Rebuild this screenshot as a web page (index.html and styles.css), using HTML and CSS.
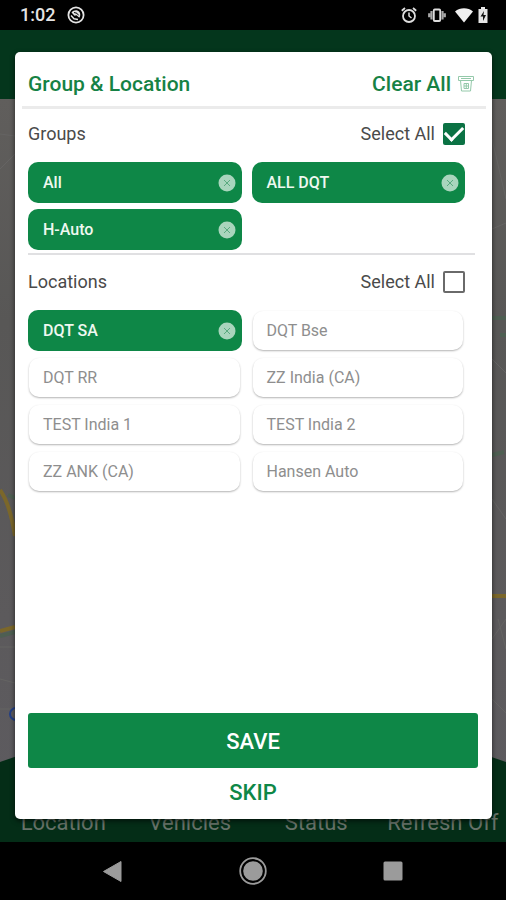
FILE: index.html
```html
<!DOCTYPE html>
<html lang="en">
<head>
<meta charset="utf-8">
<meta name="viewport" content="width=device-width, initial-scale=1">
<title>Group &amp; Location</title>
<link rel="stylesheet" href="styles.css">
</head>
<body>
<svg class="symbols" aria-hidden="true">
  <symbol id="remove" viewBox="0 0 18 18">
    <circle cx="9" cy="9" r="8.5" fill="#a9d5bd"/>
    <path d="M6 6l6 6M12 6l-6 6" stroke="#5aaa80" stroke-width="1" fill="none"/>
  </symbol>
</svg>

<header class="status">
  <span class="clock">1:02</span>
  <svg class="notice" width="18" height="18" viewBox="0 0 18 18" aria-hidden="true">
    <circle cx="9" cy="9" r="7.6" fill="none" stroke="#e4e4e4" stroke-width="1.8"/>
    <path d="M4.5 6.5c2-2.600 6-3 8-.5 1.200 1.800 1 4-.2 5.800L9.500 9.300 7.500 9.800 4.500 6.500z" fill="#e4e4e4"/>
    <path d="M4 9.500l3 3.300 4 .7M7 7l2.500.5" stroke="#e4e4e4" stroke-width="1.400" fill="none"/>
    <path d="M7 6.500l3 .8 1.500 2" stroke="#000" stroke-width="1" fill="none"/>
  </svg>
  <div class="indicators">
    <svg class="alarm" width="18" height="18" viewBox="0 0 18 18" fill="none" stroke="#dedede" aria-hidden="true">
      <circle cx="9" cy="10" r="6" stroke-width="1.800"/>
      <path d="M9 6.500V10l2.500 2" stroke-width="1.500"/>
      <path d="M1.800 4.800L5 2M16.200 4.800L13 2" stroke-width="1.800"/>
    </svg>
    <svg class="vibrate" width="18" height="18" viewBox="0 0 18 18" aria-hidden="true">
      <rect x="5.800" y="3.500" width="6.400" height="11.500" rx="1" fill="#000" stroke="#dedede" stroke-width="1.800"/>
      <path d="M3.500 5v8.500M14.500 5v8.500M1.200 7.200v4M16.800 7.200v4" stroke="#a8a8a8" stroke-width="2.200"/>
    </svg>
    <svg class="wifi" width="18" height="18" viewBox="0 0 18 18" aria-hidden="true">
      <path d="M0 5.500C5 1.200 13 1.200 18 5.500L9 16.500z" fill="#f0f0f0"/>
    </svg>
    <svg class="battery" width="12" height="18" viewBox="0 0 12 18" aria-hidden="true">
      <path d="M4 1h4v2h2.500v14h-9V3H4z" fill="#e6e6e6"/>
      <path d="M7 5L3.500 10.500H6V15l3-6H6.500z" fill="#111"/>
    </svg>
  </div>
</header>

<main class="app">
  <div class="toolbar"></div>
  <div class="map">
    <svg class="map-art" viewBox="0 0 506 743" preserveAspectRatio="none" aria-hidden="true">
      <path d="M0 35L15 37M0 70L15 55M0 548h15M0 580l15 4M0 610h15M492 40l14 60M492 130l14-6M492 260l14 14M492 400l14 20M492 540l14-20M492 600l14 14M498 520l8 30" stroke="#656463" fill="none"/>
      <path d="M8 396l7 3M0 537l15-4M492 219h14M500 236h6M492 356l12-3" stroke="#4e5f52" stroke-width="4" fill="none"/>
      <path d="M0 391Q10 405 15 437M0 532L15 528M492 497h14" stroke="#7b672a" stroke-width="4" fill="none"/>
      <circle cx="16" cy="615" r="6" stroke="#223f86" stroke-width="2" fill="none"/>
      <path d="M0 663Q253 570 506 663V743H0z" fill="#042d17"/>
    </svg>
    <nav class="tabs" aria-label="Sections">
      <a href="#location">Location</a>
      <a href="#vehicles">Vehicles</a>
      <a href="#status">Status</a>
      <a href="#refresh">Refresh Off</a>
    </nav>
  </div>

  <section class="dialog" role="dialog" aria-labelledby="dialog-title">
    <div class="dialog-head">
      <h1 id="dialog-title">Group &amp; Location</h1>
      <button class="clear" type="button">Clear All
        <svg width="18" height="18" viewBox="0 0 18 18" fill="none" stroke="#94c9aa" aria-hidden="true">
          <path d="M1.500 1.500h15v4h-15zM3.500 5.500l1 10.500h9l1-10.500M4 3.500h10"/>
          <path d="M7 8.500h4.500v5H7zM7 11h4.500M9.300 8.500v5"/>
        </svg>
      </button>
    </div>

    <section class="group divided">
      <div class="group-head">
        <h2>Groups</h2>
        <label class="select-all" for="all-groups">Select All <input id="all-groups" type="checkbox" checked></label>
      </div>
      <div class="chips">
        <button class="chip on" type="button" aria-pressed="true">All<svg><use href="#remove"/></svg></button>
        <button class="chip on" type="button" aria-pressed="true">ALL DQT<svg><use href="#remove"/></svg></button>
        <button class="chip on" type="button" aria-pressed="true">H-Auto<svg><use href="#remove"/></svg></button>
      </div>
    </section>

    <section class="group">
      <div class="group-head">
        <h2>Locations</h2>
        <label class="select-all" for="all-locations">Select All <input id="all-locations" type="checkbox"></label>
      </div>
      <div class="chips">
        <button class="chip on" type="button" aria-pressed="true">DQT SA<svg><use href="#remove"/></svg></button>
        <button class="chip" type="button" aria-pressed="false">DQT Bse</button>
        <button class="chip" type="button" aria-pressed="false">DQT RR</button>
        <button class="chip" type="button" aria-pressed="false">ZZ India (CA)</button>
        <button class="chip" type="button" aria-pressed="false">TEST India 1</button>
        <button class="chip" type="button" aria-pressed="false">TEST India 2</button>
        <button class="chip" type="button" aria-pressed="false">ZZ ANK (CA)</button>
        <button class="chip" type="button" aria-pressed="false">Hansen Auto</button>
      </div>
    </section>

    <div class="actions">
      <button class="save" type="button">SAVE</button>
      <button class="skip" type="button">SKIP</button>
    </div>
  </section>
</main>

<footer class="system">
  <button type="button" aria-label="Back"><svg width="28" height="28" viewBox="0 0 28 28"><path d="M22 4.500v20L4.500 14.500z" fill="#9b9b9b" stroke="#9b9b9b" stroke-linejoin="round"/></svg></button>
  <button type="button" aria-label="Home"><svg width="28" height="28" viewBox="0 0 28 28"><circle cx="14" cy="14" r="12.800" fill="none" stroke="#9b9b9b" stroke-width="1.800"/><circle cx="14" cy="14" r="9.800" fill="#9b9b9b"/></svg></button>
  <button type="button" aria-label="Recent apps"><svg width="28" height="28" viewBox="0 0 28 28"><rect x="4.500" y="4.500" width="19" height="19" rx="1.500" fill="#9b9b9b"/></svg></button>
</footer>
</body>
</html>
```
FILE: styles.css
```css
* {
  box-sizing: border-box;
}

body {
  margin: 0;
  min-height: 100vh;
  display: flex;
  flex-direction: column;
  background: #000;
  font-family: Roboto, "Liberation Sans", sans-serif;
}

button {
  margin: 0;
  padding: 0;
  border: 0;
  background: none;
  font: inherit;
  color: inherit;
}

h1,
h2 {
  margin: 0;
}

.symbols {
  position: absolute;
  width: 0;
  height: 0;
}

.status {
  height: 30px;
  padding: 0 17px 0 20px;
  display: flex;
  align-items: center;
  color: #e4e4e4;
}

.clock {
  font-size: 18px;
  font-weight: 500;
  line-height: 32px;
}

.notice {
  margin-left: 12px;
}

.indicators {
  margin-left: auto;
  display: flex;
  align-items: center;
}

.vibrate {
  margin-left: 10px;
}

.wifi {
  margin-left: 9px;
}

.battery {
  margin-left: 4px;
}

.app {
  position: relative;
  flex: 1;
  display: flex;
  flex-direction: column;
}

.toolbar {
  height: 69px;
  background: #04361c;
}

.map {
  position: relative;
  flex: 1;
  display: flex;
  flex-direction: column;
  justify-content: flex-end;
  background: linear-gradient(#605e5c, #585756 30%, #5c5a5c 70%, #5d5b60);
}

.map-art {
  position: absolute;
  inset: 0;
  width: 100%;
  height: 100%;
}

.tabs {
  position: relative;
  display: grid;
  grid-template-columns: repeat(4, 1fr);
  padding-bottom: 6px;
  text-align: center;
}

.tabs a {
  color: #677269;
  font-size: 22px;
  line-height: 26px;
  text-decoration: none;
  white-space: nowrap;
}

.dialog {
  position: absolute;
  inset: 22px 14px 23px 15px;
  display: flex;
  flex-direction: column;
  border-radius: 5px;
  background: #fff;
  box-shadow: 0 2px 5px rgba(0, 0, 0, 0.6);
}

.dialog-head {
  margin: 0 6px 0 7px;
  padding: 9px 11px 0 6px;
  height: 57px;
  display: flex;
  align-items: center;
  justify-content: space-between;
  border-bottom: 3px solid #ebebeb;
  color: #168245;
}

.dialog-head h1,
.clear {
  font-size: 21px;
  font-weight: 500;
  line-height: 24px;
}

.clear {
  display: flex;
  align-items: center;
  gap: 6px;
}

.group {
  margin: 0 17px 0 13px;
  padding: 2px 10px 0 0;
}

.divided {
  padding-top: 0;
  padding-bottom: 3px;
  border-bottom: 2px solid #e0e0e2;
}

.group-head {
  height: 53px;
  padding-bottom: 4px;
  display: flex;
  align-items: center;
  justify-content: space-between;
  color: #4a4a4a;
}

.group-head h2,
.select-all {
  font-size: 18px;
  font-weight: 400;
  line-height: 22px;
}

.select-all {
  display: flex;
  align-items: center;
  gap: 8px;
}

.select-all input {
  appearance: none;
  width: 22px;
  height: 22px;
  margin: 0;
  border: 2px solid #6a6a6a;
  border-radius: 2px;
}

.select-all input:checked {
  border: 0;
  background: #0b7244;
  display: grid;
  place-items: center;
}

.select-all input:checked::before {
  content: "";
  width: 15px;
  height: 8px;
  margin-bottom: 5px;
  border: solid #fff;
  border-width: 0 0 3px 3px;
  transform: rotate(-45deg);
}

.chips {
  display: grid;
  grid-template-columns: 1fr 1fr;
  gap: 6px 10px;
}

.chip {
  height: 39px;
  margin: 1px 2px 1px 1px;
  padding: 0 6px 0 14px;
  display: flex;
  align-items: center;
  justify-content: space-between;
  border-radius: 10px;
  box-shadow: 0 1px 2px rgba(0, 0, 0, 0.3);
  color: #8e8e8e;
  font-size: 16px;
  line-height: 20px;
  text-align: left;
}

.chip.on {
  height: 41px;
  margin: 0;
  padding-left: 15px;
  background: #0e8747;
  box-shadow: none;
  color: #eff8f0;
  font-weight: 500;
}

.chip svg {
  width: 18px;
  height: 18px;
}

.actions {
  margin: auto 14px 0 13px;
  display: flex;
  flex-direction: column;
  font-size: 22px;
  font-weight: 500;
}

.save {
  height: 55px;
  padding-top: 2px;
  border-radius: 3px;
  background: #0e8747;
  color: #fff;
}

.skip {
  height: 51px;
  padding-bottom: 2px;
  color: #0e8747;
}

.system {
  height: 58px;
  display: flex;
  justify-content: center;
  align-items: center;
  gap: 112px;
}

.system button,
.system svg {
  display: block;
}
```
